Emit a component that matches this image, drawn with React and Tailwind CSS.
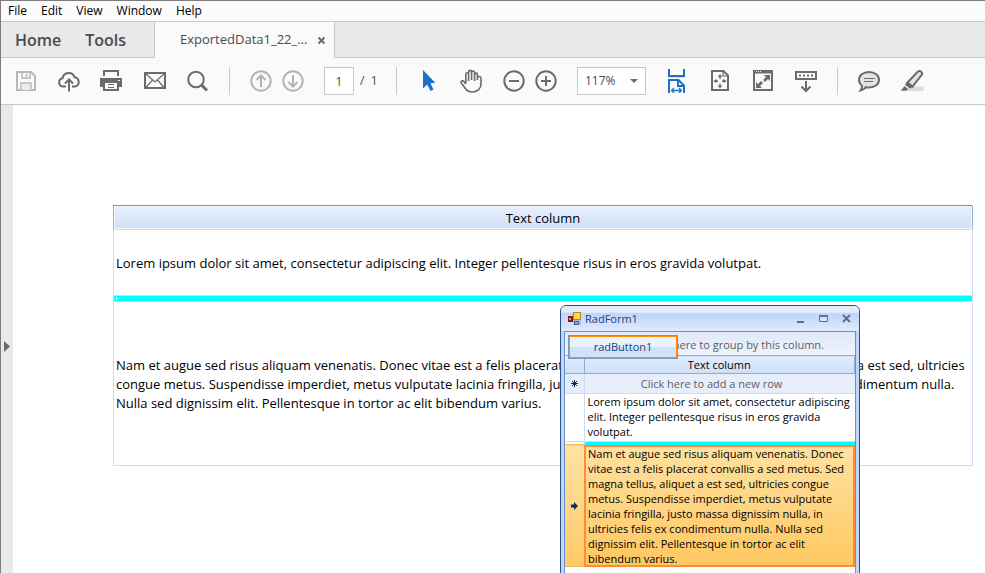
import React from "react";

const menuItems = ["File", "Edit", "View", "Window", "Help"];

const firstText = [
  "Lorem ipsum dolor sit amet, consectetur adipiscing elit. Integer pellentesque risus in eros gravida volutpat.",
];

const secondText = [
  "Nam et augue sed risus aliquam venenatis. Donec vitae est a felis placerat convallis a sed metus. Sed magna tellus, aliquet a est sed, ultricies",
  "congue metus. Suspendisse imperdiet, metus vulputate lacinia fringilla, justo massa dignissim nulla, in ultricies felis ex condimentum nulla.",
  "Nulla sed dignissim elit. Pellentesque in tortor ac elit bibendum varius.",
];

const formFirstText = [
  "Lorem ipsum dolor sit amet, consectetur adipiscing",
  "elit. Integer pellentesque risus in eros gravida",
  "volutpat.",
];

const formSecondText = [
  "Nam et augue sed risus aliquam venenatis. Donec",
  "vitae est a felis placerat convallis a sed metus. Sed",
  "magna tellus, aliquet a est sed, ultricies congue",
  "metus. Suspendisse imperdiet, metus vulputate",
  "lacinia fringilla, justo massa dignissim nulla, in",
  "ultricies felis ex condimentum nulla. Nulla sed",
  "dignissim elit. Pellentesque in tortor ac elit",
  "bibendum varius.",
];

const Lines = ({ lines }) =>
  lines.map((line) => (
    <span key={line} className="block whitespace-nowrap">
      {line}
    </span>
  ));

const ToolButton = ({ label, className = "text-[#6b6b6b]", children }) => (
  <button aria-label={label} className={`size-6 shrink-0 ${className}`}>
    <svg viewBox="0 0 24 24" className="size-6" fill="none" stroke="currentColor" strokeWidth="2">
      {children}
    </svg>
  </button>
);

const Separator = () => <div className="h-7 w-px shrink-0 bg-[#c8c8c8]" />;

const MenuBar = () => (
  <nav className="flex h-5 items-center gap-[14px] bg-[#fbfbfb] pl-[7px] text-xs text-black">
    {menuItems.map((item) => (
      <button key={item} className="leading-4">
        {item}
      </button>
    ))}
  </nav>
);

const TabBar = () => (
  <div className="flex h-[37px] border-t border-[#c8c8c8] bg-[#e9e9e9] text-[#4b4b4b]">
    <div className="flex w-[153px] items-center gap-6 border-b border-[#c8c8c8] pl-[14px] text-base font-semibold">
      <button>Home</button>
      <button>Tools</button>
    </div>
    <div className="flex w-[181px] items-center justify-between border-x border-[#c8c8c8] bg-[#fafafa] pr-2 pl-[25px]">
      <span className="text-[13px] whitespace-nowrap">ExportedData1_22_...</span>
      <button aria-label="Close tab">
        <svg viewBox="0 0 9 9" className="size-[9px]" stroke="#6b6b6b" strokeWidth="2">
          <path d="M1.500 1.500l6 6M7.500 1.500l-6 6" />
        </svg>
      </button>
    </div>
    <div className="flex-1 border-b border-[#c8c8c8]" />
  </div>
);

const Toolbar = () => (
  <div className="flex h-[47px] items-center gap-[19px] border-b border-[#c8c8c8] bg-[#fafafa] pl-[13px]">
    <ToolButton label="Save" className="text-[#b8b8b8]">
      <path d="M3 3h14l4 4v14H3z" />
      <path d="M8 3v6h8V3M12.500 5v3" strokeWidth="1.500" />
      <path d="M7 21v-7h10v7" fill="#ececec" strokeWidth="1.300" />
    </ToolButton>
    <ToolButton label="Upload">
      <path d="M9 17.500H5.800A4.200 4.200 0 0 1 5.600 9.200 6.200 6.200 0 0 1 17.600 8.300a4.700 4.700 0 0 1 .6 9.200H15" />
      <path d="M12 22.500V11M8 14.500l4-4 4 4" />
    </ToolButton>
    <ToolButton label="Print">
      <path d="M4 7V2h14v5" />
      <path d="M0 9h22v9h-3v-4H3v4H0z" fill="currentColor" stroke="none" />
      <path d="M4 13h14v8H4z" fill="#fafafa" />
      <path d="M8 15.500h6M8 18.500h6" strokeWidth="1" />
      <path d="M18 11.500h2" stroke="#fafafa" strokeWidth="1" />
    </ToolButton>
    <ToolButton label="Email">
      <path d="M2 4h20v15H2z" />
      <path d="M2.500 4.500L12 13l9.500-8.500M2.500 19l7-8M21.500 19l-7-8" strokeWidth="1.200" />
    </ToolButton>
    <ToolButton label="Search">
      <circle cx="10" cy="10.500" r="7.800" />
      <path d="M15.500 16l5.500 5.500" strokeWidth="3" />
    </ToolButton>
    <Separator />
    <div className="flex gap-2">
      <ToolButton label="Previous page" className="text-[#b3b3b3]">
        <circle cx="12" cy="12" r="9.700" />
        <path d="M12 18V7M7.500 11L12 6.500l4.500 4.500" />
      </ToolButton>
      <ToolButton label="Next page" className="text-[#b3b3b3]">
        <circle cx="12" cy="12" r="9.700" />
        <path d="M12 6v11M7.500 13l4.500 4.500 4.500-4.500" />
      </ToolButton>
    </div>
    <div className="flex items-center gap-[6px] text-xs text-[#4b4b4b]">
      <input
        aria-label="Page number"
        defaultValue="1"
        className="h-7 w-[30px] border border-[#c8c8c8] bg-white text-center outline-none"
      />
      <span className="w-[17px] whitespace-pre">/  1</span>
    </div>
    <Separator />
    <ToolButton label="Select" className="text-[#1f70c8]">
      <path d="M7 1v18.500l4.200-4L14.500 22l3-1.300-3-6.400 4.700-.5z" fill="currentColor" stroke="none" />
    </ToolButton>
    <ToolButton label="Pan">
      <path
        d="M6.800 14V5.300c0-2 2.800-2 2.800 0V12M9.600 11V3c0-2.200 3-2.200 3 0v8M12.600 11V3.500c0-2 3-2 3 0V12M15.600 11V5.500c0-1.800 2.800-1.800 2.800 0V11M18.400 9c0-2 3.600-2 3.600.5V15c0 4.500-3.500 8-8.500 8-4 0-6-1.500-7.500-4l-3.600-4.800c-1.200-2 1.300-3.200 2.600-1.600L6.800 15"
        strokeWidth="1.600"
      />
    </ToolButton>
    <div className="flex gap-2">
      <ToolButton label="Zoom out">
        <circle cx="12" cy="12" r="9.700" />
        <path d="M7 12h10" />
      </ToolButton>
      <ToolButton label="Zoom in">
        <circle cx="12" cy="12" r="9.700" />
        <path d="M7 12h10M12 7v10" />
      </ToolButton>
    </div>
    <div className="relative h-7 w-[69px] shrink-0">
      <select
        aria-label="Zoom level"
        className="size-full appearance-none border border-[#c8c8c8] bg-white pl-[7px] text-xs text-[#4b4b4b] outline-none"
      >
        <option>117%</option>
      </select>
      <svg viewBox="0 0 8 4" className="pointer-events-none absolute top-3 right-2 h-1 w-2" fill="#6b6b6b">
        <path d="M0 0h8L4 4z" />
      </svg>
    </div>
    <ToolButton label="Fit width" className="text-[#1f70c8]">
      <path d="M4 0v7h15V0" />
      <path d="M3 8.500h17" stroke="#dcdcdc" strokeWidth="1" />
      <path d="M4 24V11h9.500l5.500 5.500V24M13 11v6h6" />
      <path d="M7 21.500h9M9 19l-2.500 2.500L9 24M14 19l2.500 2.500L14 24" strokeWidth="1.300" />
    </ToolButton>
    <ToolButton label="Fit page">
      <path d="M4 2h11.500L20 6.500V21H4z" />
      <path d="M15 2v5h5" strokeWidth="1.200" />
      <path d="M12 6.500v3.500M12 14.500V18M6.500 12h3.500M14 12h3.500" strokeWidth="1.300" />
      <path d="M12 5l2.200 3H9.800zM12 19.500l2.200-3H9.800zM5.500 12l3-2.200v4.400zM18.500 12l-3-2.200v4.400z" fill="currentColor" stroke="none" />
    </ToolButton>
    <ToolButton label="Full screen">
      <path d="M3 2h18v19H3z" />
      <path d="M3 3h18" strokeWidth="3" />
      <path d="M5 2.500h5" stroke="#fafafa" strokeWidth="1" strokeDasharray="1 1" />
      <path d="M13 6h6v6l-2-2-3 3-2-2 3-3zM5 19v-6l2 2 3-3 2 2-3 3 2 2z" fill="currentColor" stroke="none" />
    </ToolButton>
    <ToolButton label="Show toolbar">
      <path d="M2 3h20v7H2z" />
      <path d="M5 6.500h14" strokeDasharray="2 2" />
      <path d="M12 12v10M7.500 17.500L12 22l4.500-4.500" />
    </ToolButton>
    <Separator />
    <ToolButton label="Comment">
      <path d="M12 3c6 0 10 3.500 10 7.800s-4 7.700-10 7.700c-1 0-2-.1-3-.3-1.500 1.800-3.300 3-5.500 3.300 1-1.300 1.600-2.800 1.500-4.800C3.200 15.300 2 13.200 2 10.800 2 6.500 6 3 12 3z" fill="#e3e3e3" />
      <path d="M7 9.500h11M7 12.500h9" strokeWidth="1.200" />
    </ToolButton>
    <ToolButton label="Highlight">
      <path d="M10 17.500h13.500V22H5z" fill="#dcdcdc" stroke="none" />
      <path d="M7.500 13.500L17.500 3c2.500-2.500 6 .5 4 3.200L12.500 17.500z" fill="#e3e3e3" />
      <path d="M6.500 13l6.500 5-3 1.500-5-3.500zM4.500 17l3.500 3-2 1.700H.8z" fill="currentColor" stroke="none" />
    </ToolButton>
  </div>
);

const ExportedTable = () => (
  <table className="w-full border-collapse text-[13px] leading-[19px] text-black">
    <thead>
      <tr>
        <th className="h-6 border border-x-[#94b0d8] border-t-[#6a94cf] border-b-[#cddcf3] bg-linear-to-b from-[#e7effc] to-[#cfe0f7] p-0 pt-px font-normal inset-shadow-[0_0_0_1px_#f4f8fe]">
          Text column
        </th>
      </tr>
    </thead>
    <tbody>
      <tr>
        <td className="h-[66px] border border-[#cddcf3] p-0 pt-[2px] pl-[2px]">
          <Lines lines={firstText} />
        </td>
      </tr>
      <tr>
        <td className="h-[6px] border-x border-b border-[#cddcf3] bg-[#00ffff] p-0">
          <div className="ml-[2px] h-[3px] w-px bg-white" />
        </td>
      </tr>
      <tr>
        <td className="h-[164px] border border-[#cddcf3] p-0 pt-[2px] pl-[2px]">
          <Lines lines={secondText} />
        </td>
      </tr>
    </tbody>
  </table>
);

const FormTitle = () => (
  <div className="flex h-[25px] items-center bg-linear-to-b from-[#e3edfd] from-25% via-[#bdd6fb] via-30% to-[#dfeafc] pr-2 pl-[7px]">
    <svg viewBox="0 0 13 13" className="size-[13px]">
      <path d="M5 3h8v10H5z" fill="#b9bcc4" />
      <path d="M0 4h5v6H0z" fill="#8b1a12" />
      <path d="M1 6h2v2H1z" fill="#f0907a" />
      <path d="M5 0h8v8H5z" fill="#b98a14" />
      <path d="M6 1h6v6H6z" fill="#ffd84a" />
      <path d="M6 9h5v4H6z" fill="#2f62b8" />
      <path d="M7 10h3v2H7z" fill="#7fa9ea" />
    </svg>
    <h2 className="flex-1 pl-1 text-[11px] text-[#1c3f83]">RadForm1</h2>
    <div className="flex items-center gap-[14px]">
      <button aria-label="Minimize">
        <svg viewBox="0 0 9 9" className="size-[9px]">
          <path d="M1 7h7v2H1z" fill="#5e6f8e" />
        </svg>
      </button>
      <button aria-label="Maximize">
        <svg viewBox="0 0 9 9" className="size-[9px]">
          <path d="M.5 1.500h8v6h-8z" fill="#d5e3fb" stroke="#5e6f8e" />
          <path d="M0 1h9v2H0z" fill="#5e6f8e" />
        </svg>
      </button>
      <button aria-label="Close">
        <svg viewBox="0 0 9 9" className="size-[9px]" stroke="#5e6f8e" strokeWidth="2">
          <path d="M1 1l7 7M8 1L1 8" />
        </svg>
      </button>
    </div>
  </div>
);

const RadForm = () => (
  <section className="absolute top-[200px] left-[559px] h-[400px] w-[300px] rounded-t-md border border-[#2f4f82] bg-[#bfd7fb] text-[11px] leading-[15px]">
    <div className="overflow-hidden rounded-t-[5px]">
      <FormTitle />
    </div>
    <div className="relative mx-[3px] h-full border border-[#6593cf] bg-white">
      <p className="h-[23px] bg-linear-to-b from-[#dfe9f9] to-[#eef3fc] pt-[5px] pr-[31px] text-right whitespace-nowrap text-[#5b6069]">
        here to group by this column.
      </p>
      <button className="absolute top-[3px] left-[3px] h-6 w-[110px] border border-[#7d95bd] bg-linear-to-b from-[#eaf2fd] from-50% to-[#d0e1f8] to-50% pb-[2px] text-[#1c3f83] inset-ring inset-ring-[#ff9000]">
        radButton1
      </button>
      <table className="w-full table-fixed border-collapse text-black">
        <colgroup>
          <col className="w-[19px]" />
          <col />
        </colgroup>
        <thead>
          <tr>
            <th className="h-[18px] border border-l-0 border-[#8fadd9] bg-linear-to-b from-[#e3edfc] to-[#cddff7] p-0" />
            <th className="h-[18px] border border-[#8fadd9] bg-linear-to-b from-[#e3edfc] to-[#cddff7] p-0 font-normal">
              Text column
            </th>
          </tr>
        </thead>
        <tbody>
          <tr className="bg-[#e8eef9] text-[#5b6069]">
            <td className="h-5 border-r border-b border-[#cddcf3] p-0">
              <svg viewBox="0 0 7 7" className="mx-auto size-[7px]" stroke="#13295c">
                <path d="M3.500 0v7M0 3.500h7M1 1l5 5M6 1L1 6" />
              </svg>
            </td>
            <td className="h-5 border-b border-[#cddcf3] p-0 pr-4 text-center">Click here to add a new row</td>
          </tr>
          <tr>
            <td className="border-r border-b border-[#cddcf3] p-0" />
            <td className="h-12 border-b border-[#cddcf3] p-0 pb-[2px] pl-[3px]">
              <Lines lines={formFirstText} />
            </td>
          </tr>
          <tr>
            <td className="h-[3px] border-r border-[#cddcf3] p-0" />
            <td className="h-[3px] bg-[#00ffff] p-0" />
          </tr>
          <tr>
            <td className="border-y border-[#f3b95a] bg-linear-to-b from-[#ffe2a3] to-[#ffc966] p-0">
              <svg viewBox="0 0 7 8" className="mx-auto h-2 w-[7px]" fill="#13295c">
                <path d="M0 2.500h3V0l4 4-4 4V5.500H0z" />
              </svg>
            </td>
            <td className="p-0">
              <div className="flex h-[122px] items-center border-2 border-[#ff8a37] bg-linear-to-b from-[#ffe1a0] to-[#ffc860] pl-[2px]">
                <div>
                  <Lines lines={formSecondText} />
                </div>
              </div>
            </td>
          </tr>
        </tbody>
      </table>
    </div>
  </section>
);

export default function App() {
  return (
    <div className="flex h-screen flex-col overflow-hidden border-t border-l border-[#7d7d7d] bg-white font-['Open_Sans',sans-serif]">
      <MenuBar />
      <TabBar />
      <Toolbar />
      <main className="relative flex flex-1">
        <aside className="flex w-3 shrink-0 items-center justify-center bg-[#e9e9e9]">
          <button aria-label="Open side panel" className="pt-4 pb-px">
            <svg viewBox="0 0 6 11" className="h-[11px] w-[6px]" fill="#6b6b6b">
              <path d="M0 0l6 5.500L0 11z" />
            </svg>
          </button>
        </aside>
        <div className="min-w-0 flex-1 pt-[100px] pr-3 pl-[100px]">
          <ExportedTable />
        </div>
        <RadForm />
      </main>
    </div>
  );
}
